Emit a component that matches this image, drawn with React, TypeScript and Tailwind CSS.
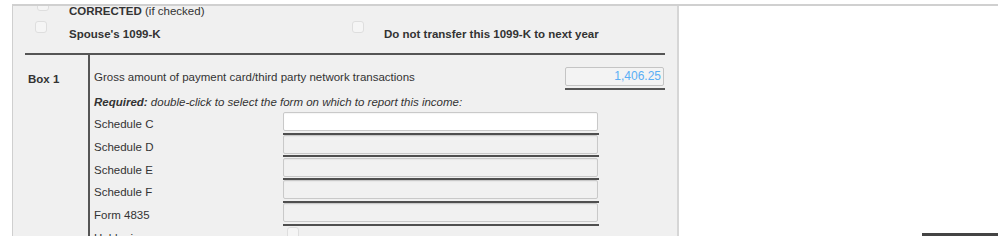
import React from "react";

/* ---------------- small pieces ---------------- */

function Checkbox({ className = "" }: { className?: string }) {
  return (
    <div
      className={`w-[12px] h-[12px] shrink-0 rounded-[3px] border border-[#dedede] bg-[#f5f5f5] ${className}`}
    />
  );
}

function FieldBox({ white = false }: { white?: boolean }) {
  return (
    <div className="w-[316px]">
      <div
        className={`h-[19px] w-[315px] rounded-[2px] border border-[#c9c9c9] shadow-[inset_0_1px_1px_rgba(0,0,0,0.04)] ${
          white ? "bg-white" : "bg-[#f1f1f1]"
        }`}
      />
      <div className="mt-[1.5px] h-[2px] bg-[#4f4f4f]" />
    </div>
  );
}

const forms = ["Schedule C", "Schedule D", "Schedule E", "Schedule F", "Form 4835"];

/* ---------------- page ---------------- */

export default function App() {
  return (
    <div className="w-[998px] h-[236px] overflow-hidden bg-white pt-[4px] font-['Liberation_Sans',Arial,sans-serif] text-[11.5px] text-[#333]">
      <div className="ml-[12px] h-[232px] border-t-2 border-[#d0d0d0] flex">
        {/* Form panel */}
        <div className="w-[667px] h-full shrink-0 overflow-hidden bg-[#f0f0f0] border-l border-[#cfcfcf] border-r-2 border-r-[#d6d6d6]">
          {/* CORRECTED (scrolled partly out of view) */}
          <div className="flex items-start pl-[24px]">
            <Checkbox className="-mt-[7px]" />
            <span className="ml-[20px] leading-[10px]">
              <b>CORRECTED</b> (if checked)
            </span>
          </div>

          {/* Spouse / transfer */}
          <div className="mt-[5px] flex items-start pl-[22px]">
            <div className="w-[317px] flex items-start">
              <Checkbox />
              <span className="ml-[22px] pt-[5px] leading-[16px] font-bold">Spouse's 1099-K</span>
            </div>
            <Checkbox />
            <span className="ml-[20px] pt-[5px] leading-[16px] font-bold">
              Do not transfer this 1099-K to next year
            </span>
          </div>

          <div className="mt-[11px] ml-[12px] w-[640px] h-[2px] bg-[#555]" />

          {/* Box 1 */}
          <div className="ml-[12px] flex h-[200px]">
            <div className="w-[63px] pl-[3px] pt-[14px] leading-[20px] font-bold">Box 1</div>
            <div className="w-[2px] bg-[#555]" />
            <div className="w-[575px]">
              <div className="mt-[12px] flex items-start justify-between">
                <span className="pl-[4px] leading-[20px]">
                  Gross amount of payment card/third party network transactions
                </span>
                <div className="w-[100px]">
                  <div className="h-[19px] w-[99px] rounded-[2px] border border-[#c4c4c4] bg-[#f3f3f3] pr-[2px] text-right text-[12px] leading-[17px] text-[#5aaef5]">
                    1,406.25
                  </div>
                  <div className="mt-[2px] h-[2px] bg-[#555]" />
                </div>
              </div>

              <div className="mt-[4px] pl-[4px] leading-[16px] italic">
                <b>Required:</b> double-click to select the form on which to report this income:
              </div>

              <div className="mt-[2px]">
                {forms.map((f, i) => (
                  <div key={f} className="flex items-start h-[22.8px]">
                    <span className="w-[193px] pl-[4px] pt-[3px] leading-[19px]">{f}</span>
                    <FieldBox white={i === 0} />
                  </div>
                ))}
                <div className="flex items-start">
                  <span className="w-[193px] pl-[4px] pt-[3px] leading-[19px]">Hobby income</span>
                  <Checkbox className="ml-[4px] mt-[1px]" />
                </div>
              </div>
            </div>
          </div>
        </div>

        {/* Empty right side */}
        <div className="flex-1 flex flex-col justify-end items-end">
          <div className="w-[76px] h-[3px] bg-[#444]" />
        </div>
      </div>
    </div>
  );
}
